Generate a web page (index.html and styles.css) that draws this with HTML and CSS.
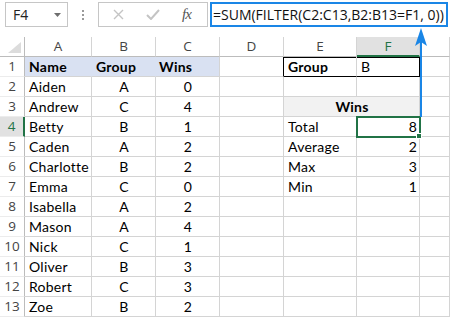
FILE: index.html
```html
<!DOCTYPE html>
<html lang="en">
<head>
  <meta charset="UTF-8" />
  <title>FILTER sum</title>
  <link rel="stylesheet" href="styles.css">
</head>
<body>
  <div class="toolbar">
    <div class="namebox">
      <span>F4</span>
      <svg class="caret" width="7" height="4" viewBox="0 0 7 4"><path d="M0 0 L7 0 L3.5 4 Z" fill="#6e6e6e"/></svg>
    </div>
    <div class="dots"><i></i><i></i><i></i></div>
    <div class="fxbox">
      <svg width="11" height="11" viewBox="0 0 11 11"><path d="M1 1 L10 10 M10 1 L1 10" stroke="#c4c4c4" stroke-width="1.4" fill="none"/></svg>
      <svg width="14" height="11" viewBox="0 0 14 11"><path d="M1 6 L5 10 L13 1" stroke="#c4c4c4" stroke-width="2" fill="none"/></svg>
      <span class="fx">fx</span>
    </div>
    <div class="formula">=SUM(FILTER(C2:C13,B2:B13=F1, 0))</div>
  </div>

  <div class="sheet">
    <div class="corner"><svg width="13" height="11" viewBox="0 0 13 11"><path d="M13 0 L13 11 L0 11 Z" fill="#dcdcdc"/></svg></div>
    <div class="ch">A</div><div class="ch">B</div><div class="ch">C</div><div class="ch">D</div><div class="ch">E</div><div class="ch chsel">F</div><div class="ch"></div>

    <div class="rh">1</div><div class="hd">Name</div><div class="hd">Group</div><div class="hd hd-end">Wins</div><div class="bx-r"></div><div class="bx b">Group</div><div class="bx bx-r">B</div><div></div>
    <div class="rh">2</div><div>Aiden</div><div class="ctr">A</div><div class="ctr">0</div><div></div><div></div><div></div><div></div>
    <div class="rh">3</div><div>Andrew</div><div class="ctr">C</div><div class="ctr">4</div><div></div><div class="merged b">Wins</div><div></div>
    <div class="rh rhsel">4</div><div>Betty</div><div class="ctr">B</div><div class="ctr">1</div><div></div><div>Total</div><div class="rt sel">8</div><div></div>
    <div class="rh">5</div><div>Caden</div><div class="ctr">A</div><div class="ctr">2</div><div></div><div>Average</div><div class="rt">2</div><div></div>
    <div class="rh">6</div><div>Charlotte</div><div class="ctr">B</div><div class="ctr">2</div><div></div><div>Max</div><div class="rt">3</div><div></div>
    <div class="rh">7</div><div>Emma</div><div class="ctr">C</div><div class="ctr">0</div><div></div><div>Min</div><div class="rt">1</div><div></div>
    <div class="rh">8</div><div>Isabella</div><div class="ctr">A</div><div class="ctr">2</div><div></div><div></div><div></div><div></div>
    <div class="rh">9</div><div>Mason</div><div class="ctr">A</div><div class="ctr">4</div><div></div><div></div><div></div><div></div>
    <div class="rh">10</div><div>Nick</div><div class="ctr">C</div><div class="ctr">1</div><div></div><div></div><div></div><div></div>
    <div class="rh">11</div><div>Oliver</div><div class="ctr">B</div><div class="ctr">3</div><div></div><div></div><div></div><div></div>
    <div class="rh">12</div><div>Robert</div><div class="ctr">C</div><div class="ctr">3</div><div></div><div></div><div></div><div></div>
    <div class="rh">13</div><div>Zoe</div><div class="ctr">B</div><div class="ctr">2</div><div></div><div></div><div></div><div></div>
  </div>

  <svg class="arrow" width="450" height="318" viewBox="0 0 450 318">
    <path d="M421 40 L421 117" stroke="#1a86e6" stroke-width="2" fill="none"/>
    <path d="M421 28 L427 46 L421 42 L415 46 Z" fill="#1a86e6"/>
  </svg>
</body>
</html>
```

FILE: styles.css
```css
body {
  margin: 0;
  width: 450px;
  height: 318px;
  overflow: hidden;
  position: relative;
  background: #fff;
  color: #000;
  font-family: Lato, "Liberation Sans", sans-serif;
}

/* formula bar */
.toolbar {
  display: flex;
  align-items: flex-start;
  height: 37px;
  box-sizing: border-box;
  padding: 2px 2px 0 5px;
}
.namebox {
  width: 63px;
  height: 25px;
  box-sizing: border-box;
  border: 1px solid #c6c6c6;
  display: flex;
  align-items: center;
  justify-content: space-between;
  padding: 0 6px 0 7px;
  font-family: "Open Sans", sans-serif;
  font-size: 14px;
  color: #222;
}
.dots {
  width: 30px;
  display: flex;
  flex-direction: column;
  align-items: center;
  gap: 2px;
  padding-top: 8px;
}
.dots i {
  width: 2px;
  height: 2px;
  background: #9a9a9a;
}
.fxbox {
  width: 110px;
  height: 25px;
  box-sizing: border-box;
  border: 1px solid #c6c6c6;
  display: flex;
  align-items: center;
  gap: 22px;
  padding-left: 14px;
}
.fx {
  font-family: "Liberation Serif", serif;
  font-style: italic;
  font-size: 15px;
  color: #555;
  letter-spacing: -1px;
}
.formula {
  margin-left: 2px;
  width: 238px;
  height: 25px;
  box-sizing: border-box;
  border: 2px solid #1a86e6;
  display: flex;
  align-items: center;
  padding-left: 1px;
  font-family: "Open Sans", sans-serif;
  font-size: 14px;
  white-space: nowrap;
  overflow: hidden;
  color: #111;
}

/* grid */
.sheet {
  display: grid;
  grid-template-columns: 25px 67px 64px 64px 64px 73px 63px 30px;
  grid-auto-rows: 20px;
}
.sheet > div {
  box-sizing: border-box;
  border-right: 1px solid #d4d4d4;
  border-bottom: 1px solid #d4d4d4;
  display: flex;
  align-items: flex-end;
  padding: 0 3px 1px 4px;
  font-size: 14px;
  letter-spacing: 0.25px;
  line-height: 17px;
  white-space: nowrap;
}
.sheet > .corner {
  justify-content: flex-end;
  padding: 0 3px 3px 0;
  border-right-color: #bcbcbc;
  border-bottom-color: #bcbcbc;
}
.sheet > .ch {
  justify-content: center;
  align-items: center;
  padding: 0;
  color: #444;
  font-family: "Open Sans", sans-serif;
  font-size: 13.5px;
  letter-spacing: 0;
  border-bottom-color: #bcbcbc;
}
.sheet > .chsel {
  background: #e1e1e1;
  color: #217346;
  border-bottom: 2px solid #217346;
}
.sheet > .rh {
  justify-content: center;
  padding: 0 0 1px;
  color: #444;
  font-family: "Open Sans", sans-serif;
  font-size: 13.5px;
  letter-spacing: 0;
  border-right-color: #bcbcbc;
  border-bottom-color: #ececec;
}
.sheet > .rhsel {
  background: #e1e1e1;
  color: #217346;
  border-right: 2px solid #217346;
}

.sheet > .hd {
  background: #d9e1f2;
  font-weight: bold;
  border-right-color: #d9e1f2;
}
.sheet > .hd-end { border-right-color: #d4d4d4; padding-left: 3px; }
.sheet > .ctr { justify-content: center; }
.sheet > .rt { justify-content: flex-end; padding-right: 2px; }
.sheet > .b { font-weight: bold; }

.sheet > .bx-r { border-right-color: #000; }
.sheet > .bx {
  border-bottom-color: #000;
  box-shadow: inset 0 1px 0 #000;
}
.sheet > .merged {
  grid-column: span 2;
  justify-content: center;
  background: #f2f2f2;
}
.sheet > .sel {
  position: relative;
  z-index: 1;
  outline: 2px solid #217346;
  outline-offset: -1px;
}
.sel::after {
  content: "";
  position: absolute;
  right: -3px;
  bottom: -3px;
  width: 4px;
  height: 4px;
  background: #217346;
  border: 1px solid #fff;
}

.arrow {
  position: absolute;
  left: 0;
  top: 0;
  pointer-events: none;
  z-index: 2;
}
```
